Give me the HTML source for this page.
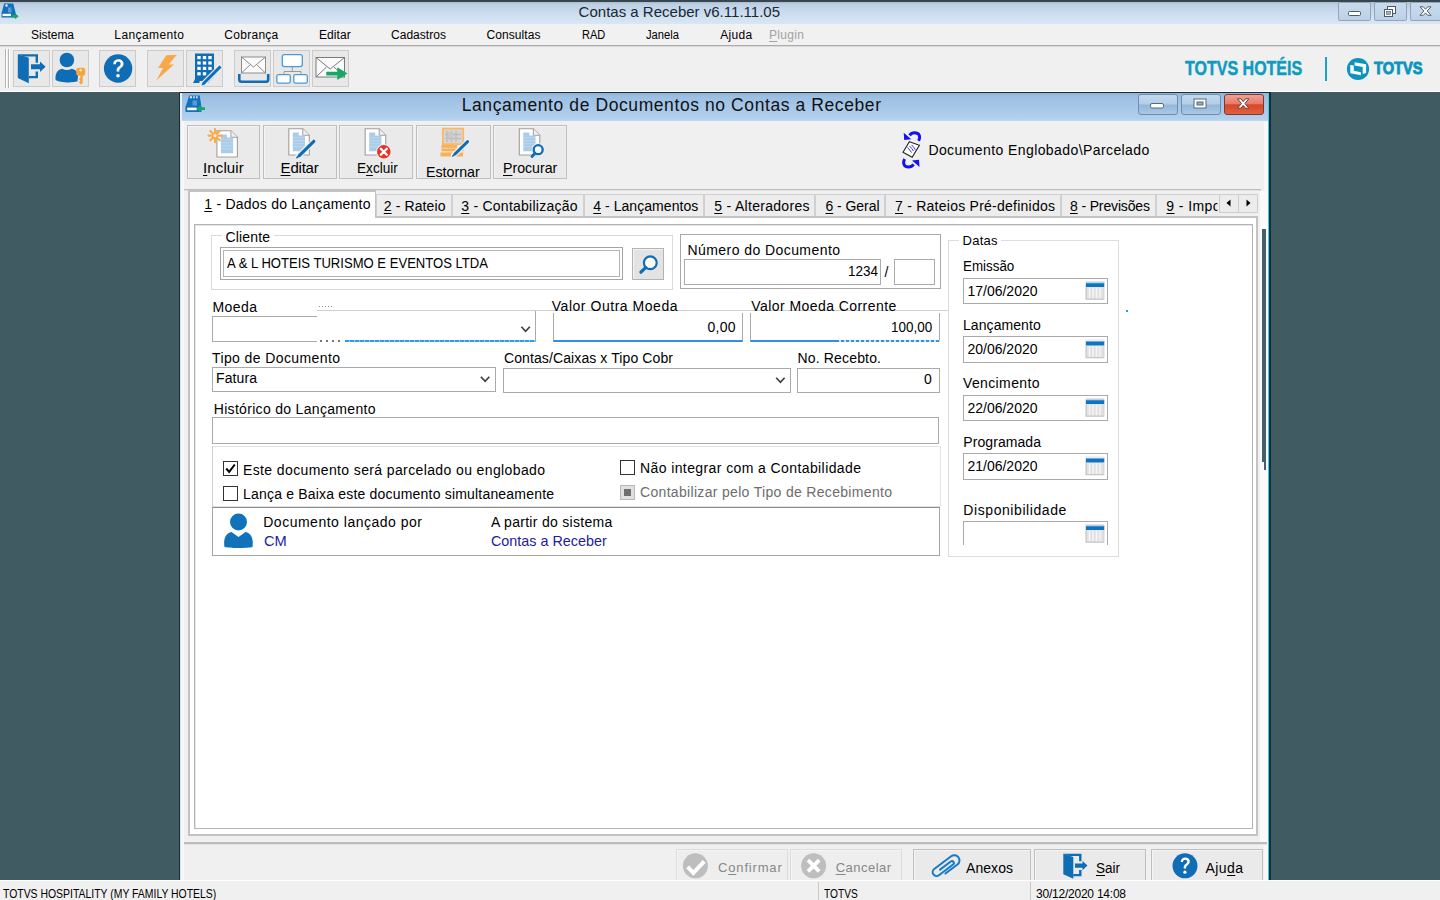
<!DOCTYPE html>
<html><head><meta charset="utf-8">
<style>
*{box-sizing:border-box;margin:0;padding:0}
html,body{width:1440px;height:900px;overflow:hidden;background:#405b62;font-family:"Liberation Sans",sans-serif;font-size:14px;color:#000}
.a{position:absolute}
.t{position:absolute;white-space:nowrap;line-height:16px;height:16px}
u{text-decoration:underline;text-underline-offset:2px;text-decoration-thickness:1px}
svg{position:absolute;overflow:visible}
.tb{position:absolute;top:50px;width:37px;height:37px;border:1px solid #cbcbcb;background:#e8e8e8}
.btn{position:absolute;border:1px solid #bfbfbf;background:#eaeaea;box-shadow:inset 1px 1px 0 #f4f4f4}
.inp{position:absolute;background:#fff;border:1px solid #aaa}
.tab{position:absolute;top:194px;height:22px;background:#ededed;border:1px solid #d0d0d0;border-bottom:none}
.cb{position:absolute;width:15px;height:15px;background:#fff;border:1px solid #333}
</style></head><body>
<!-- APP TITLE BAR -->
<div class="a" style="left:0;top:0;width:1440px;height:24px;background:linear-gradient(#38474f 0,#38474f 1.5px,#a9bccd 2px,#bccfe3 4px,#c6d9ec 10px,#d2e2f1 18px,#d9e6f3 24px)"></div>
<!-- app icon -->
<svg style="left:1px;top:3px" width="21" height="18" viewBox="0 0 21 18"><path d="M3.200 .5h9l2.500 9.500v4.500H.5V10z" fill="#1570bb"/><circle cx="5.500" cy="2.500" r="1.200" fill="#e8f2fb"/><rect x="7" y="4.500" width="3.500" height="5" fill="#5a9ad6"/><rect x="1.500" y="10.800" width="8.500" height="2.300" fill="#fff"/><path d="M10.500 12h3.500v-1.800l3.600 3-3.600 3v-1.800h-3.500z" fill="#10a86a"/></svg>
<!-- app caption buttons -->
<div class="a" style="left:1338px;top:2px;width:33px;height:19px;border:1px solid #93a5b8;border-radius:2px;background:linear-gradient(#c9dbed,#bdd1e6)"></div>
<div class="a" style="left:1374px;top:2px;width:33px;height:19px;border:1px solid #93a5b8;border-radius:2px;background:linear-gradient(#c9dbed,#bdd1e6)"></div>
<div class="a" style="left:1410px;top:2px;width:33px;height:19px;border:1px solid #93a5b8;border-radius:2px;background:linear-gradient(#c9dbed,#bdd1e6)"></div>
<svg style="left:1348px;top:11px" width="14" height="6"><rect x="0.5" y="0.5" width="12" height="4" rx="1" fill="#fff" stroke="#4c5a68"/></svg>
<svg style="left:1383px;top:5px" width="14" height="13"><rect x="4.5" y="1.5" width="8" height="7" fill="#fff" stroke="#4c5a68"/><rect x="1.5" y="4.5" width="8" height="7" fill="#fff" stroke="#4c5a68"/><rect x="3.5" y="6.5" width="4" height="3" fill="#9fb2c6" stroke="#4c5a68" stroke-width=".6"/></svg>
<svg style="left:1419px;top:6px" width="14" height="11"><path d="M1 .8h3.300l2.200 2.400L8.700.8H12L8.200 5l3.900 4.300H8.700L6.500 6.900 4.300 9.300H1L4.800 5z" fill="#fff" stroke="#55606c" stroke-width="1"/></svg>
<!-- MENU BAR -->
<div class="a" style="left:0;top:24px;width:1440px;height:22px;background:#f1f1f1"></div>
<div class="a" style="left:0;top:45px;width:1440px;height:2px;background:linear-gradient(#acacac 0,#acacac 50%,#d9d9d9 50%)"></div>
<!-- TOOLBAR -->
<div class="a" style="left:0;top:47px;width:1440px;height:44px;background:#f0f0f0"></div>
<div class="a" style="left:0;top:91px;width:1440px;height:1px;background:#fdfdfd"></div>
<div class="a" style="left:5px;top:49px;width:1px;height:39px;background:#b5b5b5"></div>
<div class="a" style="left:6px;top:49px;width:1px;height:39px;background:#fff"></div>
<div class="a" style="left:8px;top:49px;width:1px;height:39px;background:#b5b5b5"></div>
<div class="a" style="left:9px;top:49px;width:1px;height:39px;background:#fff"></div>
<div class="tb" style="left:13px"></div>
<div class="tb" style="left:52px"></div>
<div class="tb" style="left:99px"></div>
<div class="tb" style="left:147px"></div>
<div class="tb" style="left:186px"></div>
<div class="tb" style="left:234px"></div>
<div class="tb" style="left:273px"></div>
<div class="tb" style="left:312px"></div>
<!--TBICONS--><!-- toolbar icons -->
<svg style="left:0;top:0" width="360" height="92" viewBox="0 0 360 92">
<!-- 1 exit door -->
<g fill="#0f6db5">
<path d="M17.800 54.200l11 3.600v25.500l-11-5.300z"/>
<path d="M17.800 54.200h20.200v8.500h-2.400v-6.100H24z"/>
<path d="M35.600 71.500h2.400v6.800H28.800v-2.400h6.800z"/>
<path d="M31 64.300h9v-2.800l5.600 5.300-5.600 5.300v-2.800h-9z"/>
</g>
<!-- 2 user + key -->
<g fill="#0f6db5"><circle cx="66.900" cy="60" r="7.300"/><path d="M55.600 80c-.8-7 2.500-10.500 6.500-11.300 3 1.800 6.600 1.800 9.600 0 4 .8 6.500 3.500 6.300 7.300l-.5 5.300c-4 1.700-18 1.700-21.900-1.300z"/></g>
<path d="M76.200 69.300l1.500-1.500h6l1.500 1.500v5l-1.500 1.500h-1v7.200l-1.700 1.500-1.800-1.500v-1.200l1.200-1.100-1.200-1.100v-1.200l1.200-1v-1.600h-2.700l-1.500-1.500z" fill="#f5a63b"/>
<circle cx="80.700" cy="70.300" r="1.200" fill="#f0e6d6"/>
<!-- 3 help -->
<circle cx="118.100" cy="68.500" r="14.200" fill="#0f6db5"/>
<path d="M113.200 64.200c.2-3.200 2.300-5 5.200-5 3 0 5.100 1.800 5.100 4.500 0 2.200-1.200 3.300-2.600 4.300-1.200.9-1.600 1.500-1.600 3v.6h-2.700v-.9c0-2 .7-3 2.200-4.100 1.300-.9 1.800-1.600 1.800-2.800 0-1.300-.9-2.200-2.300-2.200-1.500 0-2.400.9-2.500 2.600z" fill="#fff"/>
<circle cx="118" cy="75.800" r="1.800" fill="#fff"/>
<!-- 4 lightning -->
<path d="M166.300 55.300l10.500-.5-8 9.800 5.200-.2-17.800 16.200 6.900-12.600-5 .1z" fill="#f7a94a"/>
<!-- 5 building + pencil -->
<path d="M195 53.500h19v23l-6 6.500h-2.500v-2h-6v2H193l2-4z" fill="#0f6db5"/>
<g fill="#fff"><rect x="197.300" y="56" width="3.400" height="3.200"/><rect x="202.800" y="56" width="3.400" height="3.200"/><rect x="208.300" y="56" width="3.400" height="3.200"/>
<rect x="197.300" y="61.400" width="3.400" height="3.200"/><rect x="202.800" y="61.400" width="3.400" height="3.200"/><rect x="208.300" y="61.400" width="3.400" height="3.200"/>
<rect x="197.300" y="66.800" width="3.400" height="3.200"/><rect x="202.800" y="66.800" width="3.400" height="3.200"/><rect x="208.300" y="66.800" width="3.400" height="3.200"/>
<rect x="197.300" y="72.200" width="3.400" height="3.200"/><rect x="202.800" y="72.200" width="3.400" height="3.200"/></g>
<path d="M219.500 64.500l3 3-17.500 17.500-4.500 1.500 1.500-4.500z" fill="#0f6db5" stroke="#ececec" stroke-width="1.200"/>
<!-- 6 envelope + tray -->
<rect x="241.500" y="57" width="24" height="16" fill="#fbfbfb" stroke="#8c8c8c" stroke-width="1"/>
<path d="M241.500 57l12 10 12-10M241.500 73l9-8.500M265.500 73l-9-8.500" fill="none" stroke="#8c8c8c" stroke-width="1"/>
<path d="M239.300 74v5.500q0 2.200 2.200 2.200h24.500q2.200 0 2.200-2.200V74" fill="none" stroke="#0f6db5" stroke-width="2.600"/>
<!-- 7 network -->
<rect x="282.300" y="54.600" width="20" height="12" rx="2" fill="#fff" stroke="#4a9ad8" stroke-width="1.300"/>
<path d="M292.300 67v4.500M284 75v-3.500h17V75" fill="none" stroke="#9a9a9a" stroke-width="1"/>
<rect x="276.800" y="74.600" width="13.500" height="8.600" rx="1.800" fill="#fff" stroke="#4a9ad8" stroke-width="1.300"/>
<rect x="293.800" y="74.600" width="13.500" height="8.600" rx="1.800" fill="#fff" stroke="#4a9ad8" stroke-width="1.300"/>
<!-- 8 envelope + arrow -->
<rect x="316" y="57.500" width="28.500" height="19.500" fill="#fbfbfb" stroke="#7a7a7a" stroke-width="1"/>
<path d="M316 57.500l14.200 11.500 14.300-11.500M316 77l10.500-10M344.500 77l-10.500-10" fill="none" stroke="#7a7a7a" stroke-width="1"/>
<path d="M326.300 71.700h11v-4.500l10.200 6.300-10.200 6.500v-4.500h-11z" fill="#18a765"/>
</svg>
<!--/TBICONS-->
<!-- logo -->
<div class="a" style="left:1324.500px;top:56.500px;width:2px;height:24.500px;background:#1aa3c6"></div>
<svg style="left:1344.900px;top:55.800px" width="26" height="26" viewBox="-13 -13 26 26"><circle r="11.100" fill="#0b95bd"/><path d="M-3.400-6.800L8.100-4.700V4L4.700 4.900V-1.900L-3.400-3.600z" fill="#fbfbfb"/><path d="M-7.700-4L-4.150-3.400V1.700L3 3.200V6.200L-7.700 4.150z" fill="#fbfbfb"/></svg>
<!-- CHILD WINDOW -->
<div class="a" style="left:179px;top:92px;width:1092px;height:788px;background:#1f2a30"></div>
<div class="a" style="left:180px;top:93px;width:1089px;height:787px;background:#c4dbef"></div>
<div class="a" style="left:1268px;top:93px;width:1px;height:787px;background:#1fd8f2"></div>
<div class="a" style="left:180px;top:93px;width:1088px;height:28px;background:linear-gradient(#8fb4d9 0,#9dbfe2 4px,#a6c7e8 14px,#b3d0ed 26px,#c0d9f0 28px)"></div>
<div class="a" style="left:184px;top:121px;width:1080px;height:759px;background:#f0f0f0"></div>
<div class="a" style="left:1264px;top:121px;width:4px;height:759px;background:#f8f8f8"></div>
<div class="a" style="left:1260px;top:191px;width:7px;height:653px;background:#fafafa"></div>
<div class="a" style="left:180px;top:121px;width:1px;height:759px;background:#cfe4f6"></div><div class="a" style="left:181px;top:121px;width:3px;height:759px;background:#f7f7f7"></div>
<div class="a" style="left:180px;top:93px;width:2px;height:28px;background:#e9f2fb"></div>
<!-- child icon -->
<svg style="left:185px;top:95px" width="21" height="18" viewBox="0 0 21 18"><path d="M4.200 .5h10.500l1.800 11.500v5H.5v-5z" fill="#1570bb"/><path d="M4.800 1.300h2.200v2H4.800zM8.200 1.300h1.600v2H8.200zM11 1.300h1.600v2H11z" fill="#dbe9f6"/><rect x="7.500" y="5.500" width="4.500" height="5" fill="#5a9ad6"/><rect x="2.200" y="12.600" width="9.500" height="2.600" fill="#fff"/><path d="M20 12.300h-4.500v-2.200l-4 3.600 4 3.600v-2.200H20z" fill="#10a86a"/></svg>
<!-- child caption buttons -->
<div class="a" style="left:1138px;top:94px;width:40px;height:21px;border:1px solid #6f8daf;border-radius:3px;background:linear-gradient(#c3d9ef 0,#b4cde7 48%,#93b6d9 52%,#a9c8e6 100%)"></div>
<div class="a" style="left:1181px;top:94px;width:40px;height:21px;border:1px solid #6f8daf;border-radius:3px;background:linear-gradient(#c3d9ef 0,#b4cde7 48%,#93b6d9 52%,#a9c8e6 100%)"></div>
<div class="a" style="left:1224px;top:94px;width:40px;height:21px;border:1px solid #7a3a33;border-radius:3px;background:linear-gradient(#f0a094 0,#e67e6d 45%,#d8462a 52%,#e0603f 100%)"></div>
<svg style="left:1150px;top:103px" width="16" height="7"><rect x="0.5" y="0.5" width="13" height="4.500" rx="1.5" fill="#fff" stroke="#59687a"/></svg>
<svg style="left:1193px;top:98px" width="16" height="12"><rect x="1" y="1" width="12" height="9" fill="#fff" stroke="#59687a"/><rect x="4" y="4" width="6" height="3" fill="#8fb0d2" stroke="#59687a"/></svg>
<svg style="left:1236px;top:98px" width="16" height="12"><path d="M1.500 .8h3.400l2.300 2.800 2.300-2.800h3.400L8.900 5.500l4 4.700H9.500L7.200 7.400 4.900 10.200H1.500l4-4.700z" fill="#fff" stroke="#6b3a36" stroke-width="1"/></svg>
<!-- child toolbar buttons -->
<div class="btn" style="left:187px;top:125px;width:73px;height:54px"></div>
<div class="btn" style="left:263px;top:125px;width:74px;height:54px"></div>
<div class="btn" style="left:339px;top:125px;width:74px;height:54px"></div>
<div class="btn" style="left:416px;top:125px;width:75px;height:54px"></div>
<div class="btn" style="left:493px;top:125px;width:74px;height:54px"></div>
<!--CHICONS--><svg style="left:0;top:0" width="1300" height="200" viewBox="0 0 1300 200">
<defs>
<g id="doc"><path d="M0.500 0.500h14l6.500 6.500v19.700H0.500z" fill="#fff" stroke="#a39e9e" stroke-width="1.100"/><path d="M14.500 0.500v6.500h6.500" fill="#eee" stroke="#a39e9e" stroke-width="1"/></g>
</defs>
<!-- Incluir -->
<g transform="translate(216.400,130.300)"><g transform=""><g><path d="M0.500 0.500h14l6.500 6.500v19.700H0.500z" fill="#fff" stroke="#a39e9e" stroke-width="1.100"/><path d="M14.500 0.500v6.500h6.500" fill="#eee" stroke="#a39e9e" stroke-width="1"/></g></g><path d="M4.500 4.300h6v3h6.200v15.600H4.500z" fill="#a9cce9"/><path d="M4.500 9.500h12.200M4.500 12.500h12.200M4.500 15.500h12.200M4.500 18.500h12.200" stroke="#c4dcf0" stroke-width=".8"/></g>
<g stroke="#f8ab4c" stroke-width="2.100" stroke-linecap="round"><path d="M215 129v13.200M208.400 135.600h13.200M210.300 130.900l9.400 9.400M219.700 130.900l-9.400 9.400"/></g>
<circle cx="215" cy="135.600" r="1.600" fill="#fff3e0"/>
<!-- Editar -->
<g transform="translate(288.300,128.300)"><g transform=""><g><path d="M0.500 0.500h14l6.500 6.500v19.700H0.500z" fill="#fff" stroke="#a39e9e" stroke-width="1.100"/><path d="M14.500 0.500v6.500h6.500" fill="#eee" stroke="#a39e9e" stroke-width="1"/></g></g><path d="M4.500 4.300h6v3h6.200v15.600H4.500z" fill="#a9cce9"/><path d="M4.500 9.500h12.200M4.500 12.500h12.200M4.500 15.500h12.200M4.500 18.500h12.200" stroke="#c4dcf0" stroke-width=".8"/></g>
<path d="M313.800 141.300L298 156.800" stroke="#f0f0f0" stroke-width="5.500" stroke-linecap="round"/>
<path d="M313.800 141.300L299.300 155.600" stroke="#0f6db5" stroke-width="3.200" stroke-linecap="round"/>
<path d="M300.300 154.600l-3.300 3" stroke="#0f6db5" stroke-width="1.800" stroke-linecap="round"/>
<!-- Excluir -->
<g transform="translate(364.700,128.300)"><g transform=""><g><path d="M0.500 0.500h14l6.500 6.500v19.700H0.500z" fill="#fff" stroke="#a39e9e" stroke-width="1.100"/><path d="M14.500 0.500v6.500h6.500" fill="#eee" stroke="#a39e9e" stroke-width="1"/></g></g><path d="M4.500 4.300h6v3h6.200v15.600H4.500z" fill="#a9cce9"/><path d="M4.500 9.500h12.200M4.500 12.500h12.200M4.500 15.500h12.200M4.500 18.500h12.200" stroke="#c4dcf0" stroke-width=".8"/></g>
<circle cx="383.800" cy="151.700" r="7.600" fill="#f0f0f0"/>
<circle cx="383.800" cy="151.700" r="6.800" fill="#e4352b"/>
<path d="M380.800 148.700l6 6M386.800 148.700l-6 6" stroke="#fff" stroke-width="2.300" stroke-linecap="round"/>
<!-- Estornar -->
<rect x="442.800" y="128.600" width="20.400" height="15.500" fill="#d6d6d6" stroke="#f9b968" stroke-width="1.800"/>
<path d="M447 131v11M451.500 131v11M456 131v11M445 134.500h16M445 138.500h16" stroke="#bdbdbd" stroke-width="1.400"/>
<rect x="448" y="132" width="5" height="6" fill="#c9c9c9"/>
<path d="M441.500 145h15.500v3h6.500v3.200h-22zM440.500 152.300h22.500v4.200h-22.500z" fill="#f9b056"/>
<path d="M441.500 148.300h21M440.500 152.200h22" stroke="#fcd6a4" stroke-width=".8"/>
<path d="M467.600 141.600L453.600 155.300" stroke="#f0f0f0" stroke-width="5.500" stroke-linecap="round"/>
<path d="M467.600 141.600L455 154" stroke="#0f6db5" stroke-width="3" stroke-linecap="round"/>
<path d="M455.800 153.200l-3 2.800" stroke="#0f6db5" stroke-width="1.700" stroke-linecap="round"/>
<!-- Procurar -->
<g transform="translate(518.800,128.300)"><g transform=""><g><path d="M0.500 0.500h14l6.500 6.500v19.700H0.500z" fill="#fff" stroke="#a39e9e" stroke-width="1.100"/><path d="M14.500 0.500v6.500h6.500" fill="#eee" stroke="#a39e9e" stroke-width="1"/></g></g><path d="M4.500 4.300h6v3h6.200v15.600H4.500z" fill="#a9cce9"/><path d="M4.500 9.500h12.200M4.500 12.500h12.200M4.500 15.500h12.200M4.500 18.500h12.200" stroke="#c4dcf0" stroke-width=".8"/></g>
<circle cx="538.200" cy="149.700" r="6.600" fill="#f0f0f0"/>
<circle cx="538.200" cy="149.700" r="4.500" fill="#f4fbff" stroke="#0f6db5" stroke-width="2.300"/>
<path d="M535 153.200l-3 3.300" stroke="#0f6db5" stroke-width="2.800" stroke-linecap="round"/>
</svg>
<!--/CHICONS-->
<!-- separator line above tabs -->
<div class="a" style="left:184px;top:189px;width:1077px;height:1px;background:#bdbdbd"></div>
<div class="a" style="left:184px;top:190px;width:1077px;height:1px;background:#e2e2e2"></div>
<!-- tab page frame -->
<div class="a" style="left:188px;top:216px;width:1070px;height:620px;background:#fff;border:2px solid #c3c3c3"></div>
<div class="a" style="left:194px;top:224px;width:1059px;height:605px;background:#fff;border:1px solid #b4b4b4;box-shadow:inset 1px 1px 0 #e6e6e6"></div>
<!-- tabs -->
<div class="tab" style="left:376px;width:76px"></div>
<div class="tab" style="left:452px;width:132px"></div>
<div class="tab" style="left:584px;width:120px"></div>
<div class="tab" style="left:704px;width:111px"></div>
<div class="tab" style="left:815px;width:70px"></div>
<div class="tab" style="left:885px;width:176px"></div>
<div class="tab" style="left:1061px;width:95px"></div>
<div class="tab" style="left:1156px;width:64px;border-right:none"></div>
<div class="a" style="left:188px;top:190px;width:188px;height:28px;background:#fff;border:2px solid #c3c3c3;border-bottom:none;border-right:1px solid #c3c3c3"></div>
<!-- tab scroll buttons -->
<div class="a" style="left:1219px;top:194px;width:20px;height:19px;background:#ececec;border:1px solid #cdcdcd"></div>
<div class="a" style="left:1238px;top:194px;width:20px;height:19px;background:#ececec;border:1px solid #cdcdcd"></div>
<svg style="left:1225px;top:199px" width="8" height="9"><path d="M5.500 0.500v7L1.500 4z" fill="#000"/></svg>
<svg style="left:1245px;top:199px" width="8" height="9"><path d="M1.500 0.500v7L5.500 4z" fill="#000"/></svg>
<!-- right dark strip -->
<div class="a" style="left:1262px;top:229px;width:4px;height:233px;background:#44606a"></div>
<div class="a" style="left:1264px;top:462px;width:2px;height:8px;background:#44606a"></div>
<!-- bottom separator -->
<div class="a" style="left:184px;top:842px;width:1083px;height:2px;background:#bcbcbc"></div>
<div class="a" style="left:184px;top:844px;width:1083px;height:1px;background:#e4e4e4"></div>
<!-- bottom buttons -->
<div class="btn" style="left:676px;top:849px;width:112px;height:31px;border-bottom:none;background:#eee;border-color:#dcdcdc"></div>
<div class="btn" style="left:790px;top:849px;width:112px;height:31px;border-bottom:none;background:#eee;border-color:#dcdcdc"></div>
<div class="btn" style="left:913px;top:849px;width:118px;height:31px;border-bottom:none"></div>
<div class="btn" style="left:1034px;top:849px;width:112px;height:31px;border-bottom:none"></div>
<div class="btn" style="left:1151px;top:849px;width:112px;height:31px;border-bottom:none"></div>
<!--BOTICONS--><svg style="left:0;top:0" width="1300" height="880" viewBox="0 0 1300 880">
<!-- confirmar -->
<circle cx="695.400" cy="865.800" r="12.500" fill="#bebebe"/>
<path d="M687.600 866.800l5.800 6 10.800-11.500" fill="none" stroke="#fff" stroke-width="4"/>
<!-- cancelar -->
<circle cx="813.600" cy="865.800" r="12.500" fill="#bebebe"/>
<path d="M808 860.200l11.200 11.200M819.200 860.200l-11.200 11.200" fill="none" stroke="#fff" stroke-width="3.800"/>
<!-- anexos paperclip -->
<g transform="translate(946.300,866.400) rotate(53)">
<path d="M5.200 5V-10a5.200 5.200 0 0 0-10.400 0V11.200a3.900 3.900 0 0 0 7.800 0V-6.500a1.900 1.900 0 0 0-3.800 0V7" fill="none" stroke="#1879c4" stroke-width="2" stroke-linecap="round"/>
</g>
<!-- sair -->
<g fill="#0f6db5" transform="translate(1045.500,799.500)">
<path d="M17.800 54.200l10 3.300v21.800l-10-4.500z"/>
<path d="M17.800 54.200h18.200v7.500h-2.400v-5.100H24z"/>
<path d="M33.600 70.500h2.400v6.300H27.800v-2.400h5.800z"/>
<path d="M29.500 64h7.500v-2.600l5 4.700-5 4.700v-2.600h-7.500z"/>
</g>
<!-- ajuda -->
<circle cx="1185" cy="865.800" r="12.500" fill="#0f6db5"/>
<path d="M1180.700 862c.2-2.800 2-4.400 4.600-4.400 2.600 0 4.500 1.600 4.500 4 0 1.900-1.100 2.900-2.300 3.800-1.100.800-1.400 1.300-1.400 2.600v.5h-2.400v-.8c0-1.800.6-2.600 1.900-3.600 1.100-.8 1.600-1.400 1.600-2.500 0-1.100-.8-1.900-2-1.900-1.300 0-2.100.8-2.200 2.300z" fill="#fff"/>
<circle cx="1184.900" cy="872.200" r="1.600" fill="#fff"/>
</svg>
<!--/BOTICONS-->
<!-- FORM -->
<!-- Cliente group -->
<div class="a" style="left:211px;top:235px;width:462px;height:55px;border:1px solid #dadada"></div>
<div class="a" style="left:222px;top:230px;width:52px;height:14px;background:#fff"></div>
<div class="inp" style="left:220px;top:247px;width:403px;height:33px;border-color:#a4a4a4"></div>
<div class="a" style="left:223px;top:250px;width:397px;height:27px;border:1px solid #b4b4b4"></div>
<div class="btn" style="left:632px;top:248px;width:32px;height:32px;background:#e3e3e3;border-color:#b3b3b3"></div>
<!-- Numero group -->
<div class="a" style="left:680px;top:234px;width:261px;height:55px;border:1px solid #a8a8a8;box-shadow:inset 1px 1px 0 #fff,1px 1px 0 #fff"></div>
<div class="inp" style="left:684px;top:259px;width:197px;height:26px"></div>
<div class="inp" style="left:894px;top:259px;width:41px;height:26px"></div>
<!-- Moeda row -->
<div class="inp" style="left:212px;top:316px;width:324px;height:26px"></div>
<div class="inp" style="left:553px;top:313px;width:190px;height:29px;border-top:none;border-bottom:2px solid #2f8fe0"></div>
<div class="inp" style="left:750px;top:313px;width:190px;height:29px;border-top:none;border-bottom:2px solid #2f8fe0"></div>
<!-- overlay artifact -->
<div class="a" style="left:317px;top:311px;width:219px;height:6px;background:#fff"></div>
<div class="a" style="left:317px;top:310px;width:631px;height:1px;background:#cfcfcf"></div>
<div class="a" style="left:535px;top:311px;width:1px;height:6px;background:#aaa"></div>
<div class="a" style="left:317px;top:340px;width:218px;height:3px;background:#fff"></div>
<div class="a" style="left:319px;top:306px;width:14px;height:1px;background:repeating-linear-gradient(90deg,#9a9a9a 0,#9a9a9a 1px,#fff 1px,#fff 3px)"></div>
<div class="a" style="left:320px;top:340px;width:22px;height:2px;background:repeating-linear-gradient(90deg,#777 0,#777 2px,#fff 2px,#fff 6px)"></div>
<div class="a" style="left:345px;top:340px;width:190px;height:2px;background:repeating-linear-gradient(90deg,#2f9be8 0,#2f9be8 4px,#8cc8f2 4px,#8cc8f2 5px)"></div>
<div class="a" style="left:836px;top:340px;width:104px;height:2px;background:repeating-linear-gradient(90deg,#2f8fe0 0,#2f8fe0 3px,#cfe6f8 3px,#cfe6f8 5px)"></div>
<div class="a" style="left:1126px;top:310px;width:2px;height:2px;background:#2f9be8"></div>
<!-- Tipo row -->
<div class="inp" style="left:212px;top:367px;width:284px;height:25px"></div>
<div class="inp" style="left:503px;top:368px;width:288px;height:25px"></div>
<div class="inp" style="left:797px;top:368px;width:143px;height:25px"></div>
<!-- Historico -->
<div class="inp" style="left:212px;top:417px;width:727px;height:27px"></div>
<!-- checkbox panel -->
<div class="a" style="left:212px;top:446px;width:729px;height:61px;border:1px solid #e3e3e3;border-left-color:#cfcfcf"></div>
<div class="cb" style="left:223px;top:461px"></div>
<div class="cb" style="left:223px;top:486px"></div>
<div class="cb" style="left:620px;top:460px"></div>
<div class="cb" style="left:620px;top:485px;background:#e0e0e0;border-color:#b9b9b9"></div>
<div class="a" style="left:624px;top:489px;width:7px;height:7px;background:#6e6e6e"></div>
<svg style="left:224px;top:462px" width="13" height="13"><path d="M2.200 6.500l3 3.400L10.800 2.500" fill="none" stroke="#000" stroke-width="2"/></svg>
<!-- info box -->
<div class="a" style="left:212px;top:507px;width:728px;height:49px;background:#fff;border:1px solid #a6a6a6;border-top-color:#8c8c8c"></div>
<svg style="left:224px;top:513px" width="29" height="35" viewBox="0 0 29 35"><circle cx="14.500" cy="9" r="8.500" fill="#1072b8"/><path d="M0.500 34c-1.500-9 2-14 7-15l7 5 7-5c5 1 8.500 6 7 15c-4 1.300-24 1.300-28 0z" fill="#1072b8"/></svg>
<!-- Datas group -->
<div class="a" style="left:948px;top:240px;width:171px;height:317px;border:1px solid #dddddd"></div>
<div class="a" style="left:959px;top:233px;width:42px;height:14px;background:#fff"></div>
<div class="inp" style="left:963px;top:278px;width:145px;height:26px"></div>
<div class="inp" style="left:963px;top:336px;width:145px;height:27px"></div>
<div class="inp" style="left:963px;top:395px;width:145px;height:26px"></div>
<div class="inp" style="left:963px;top:453px;width:145px;height:27px"></div>
<div class="inp" style="left:963px;top:521px;width:145px;height:24px;border-bottom:none"></div>
<!--FORMICONS--><svg style="left:0;top:0" width="1300" height="600" viewBox="0 0 1300 600">
<defs>
<g id="cal"><rect x="0" y="0" width="19" height="1.200" fill="#f3dede"/><rect x="0.500" y="2" width="18.500" height="4.200" fill="#1173bd"/><rect x="0.500" y="1.500" width="18.500" height="1" fill="#57b3e8"/><rect x="0.500" y="6.200" width="18.500" height="12.300" fill="#e2e2e2"/><path d="M4.200 6.500v11.500M7.700 6.500v11.500M11.200 6.500v11.500M14.700 6.500v11.500" stroke="#f6f6f6" stroke-width="1.300"/><path d="M0.800 6.200v12h18" fill="none" stroke="#c6c6c6" stroke-width="1.200"/><rect x="17.800" y="6.200" width="1.200" height="12" fill="#d8d8d8"/></g>
<path id="chev" d="M-4.200-2.800L0 1.800 4.200-2.800" fill="none" stroke="#404040" stroke-width="1.700"/>
</defs>
<!-- search magnifier -->
<circle cx="650.300" cy="262.800" r="6.400" fill="#fdfdfd" stroke="#0f6db5" stroke-width="2.200"/>
<path d="M645.600 267.600l-4.700 4.600" stroke="#0f6db5" stroke-width="3.200" stroke-linecap="round"/>
<!-- calendars -->
<g transform="translate(1085.300,281)"><g><rect x="0" y="0" width="19" height="1.200" fill="#f3dede"/><rect x="0.500" y="2" width="18.500" height="4.200" fill="#1173bd"/><rect x="0.500" y="1.500" width="18.500" height="1" fill="#57b3e8"/><rect x="0.500" y="6.200" width="18.500" height="12.300" fill="#e2e2e2"/><path d="M4.200 6.500v11.500M7.700 6.500v11.500M11.200 6.500v11.500M14.700 6.500v11.500" stroke="#f6f6f6" stroke-width="1.300"/><path d="M0.800 6.200v12h18" fill="none" stroke="#c6c6c6" stroke-width="1.200"/><rect x="17.800" y="6.200" width="1.200" height="12" fill="#d8d8d8"/></g></g>
<g transform="translate(1085.300,339.500)"><g><rect x="0" y="0" width="19" height="1.200" fill="#f3dede"/><rect x="0.500" y="2" width="18.500" height="4.200" fill="#1173bd"/><rect x="0.500" y="1.500" width="18.500" height="1" fill="#57b3e8"/><rect x="0.500" y="6.200" width="18.500" height="12.300" fill="#e2e2e2"/><path d="M4.200 6.500v11.500M7.700 6.500v11.500M11.200 6.500v11.500M14.700 6.500v11.500" stroke="#f6f6f6" stroke-width="1.300"/><path d="M0.800 6.200v12h18" fill="none" stroke="#c6c6c6" stroke-width="1.200"/><rect x="17.800" y="6.200" width="1.200" height="12" fill="#d8d8d8"/></g></g>
<g transform="translate(1085.300,398)"><g><rect x="0" y="0" width="19" height="1.200" fill="#f3dede"/><rect x="0.500" y="2" width="18.500" height="4.200" fill="#1173bd"/><rect x="0.500" y="1.500" width="18.500" height="1" fill="#57b3e8"/><rect x="0.500" y="6.200" width="18.500" height="12.300" fill="#e2e2e2"/><path d="M4.200 6.500v11.500M7.700 6.500v11.500M11.200 6.500v11.500M14.700 6.500v11.500" stroke="#f6f6f6" stroke-width="1.300"/><path d="M0.800 6.200v12h18" fill="none" stroke="#c6c6c6" stroke-width="1.200"/><rect x="17.800" y="6.200" width="1.200" height="12" fill="#d8d8d8"/></g></g>
<g transform="translate(1085.300,456.500)"><g><rect x="0" y="0" width="19" height="1.200" fill="#f3dede"/><rect x="0.500" y="2" width="18.500" height="4.200" fill="#1173bd"/><rect x="0.500" y="1.500" width="18.500" height="1" fill="#57b3e8"/><rect x="0.500" y="6.200" width="18.500" height="12.300" fill="#e2e2e2"/><path d="M4.200 6.500v11.500M7.700 6.500v11.500M11.200 6.500v11.500M14.700 6.500v11.500" stroke="#f6f6f6" stroke-width="1.300"/><path d="M0.800 6.200v12h18" fill="none" stroke="#c6c6c6" stroke-width="1.200"/><rect x="17.800" y="6.200" width="1.200" height="12" fill="#d8d8d8"/></g></g>
<g transform="translate(1085.300,524)"><g><rect x="0" y="0" width="19" height="1.200" fill="#f3dede"/><rect x="0.500" y="2" width="18.500" height="4.200" fill="#1173bd"/><rect x="0.500" y="1.500" width="18.500" height="1" fill="#57b3e8"/><rect x="0.500" y="6.200" width="18.500" height="12.300" fill="#e2e2e2"/><path d="M4.200 6.500v11.500M7.700 6.500v11.500M11.200 6.500v11.500M14.700 6.500v11.500" stroke="#f6f6f6" stroke-width="1.300"/><path d="M0.800 6.200v12h18" fill="none" stroke="#c6c6c6" stroke-width="1.200"/><rect x="17.800" y="6.200" width="1.200" height="12" fill="#d8d8d8"/></g></g>
<!-- chevrons -->
<g transform="translate(525.600,329.500)"><path d="M-4.200-2.800L0 1.800 4.200-2.800" fill="none" stroke="#404040" stroke-width="1.700"/></g>
<g transform="translate(485.100,379.500)"><path d="M-4.200-2.800L0 1.800 4.200-2.800" fill="none" stroke="#404040" stroke-width="1.700"/></g>
<g transform="translate(780.400,380.500)"><path d="M-4.200-2.800L0 1.800 4.200-2.800" fill="none" stroke="#404040" stroke-width="1.700"/></g>
<!-- documento englobado icon -->
<g id="darr"><path d="M918.600 140.800c2.200-4.200.8-8-4.200-8-2 0-3.500.8-4.800 2.600" fill="none" stroke="#1212ee" stroke-width="2.900"/><path d="M903.700 132.800l.5 7.200 7-.8z" fill="#1212ee"/></g>
<g transform="rotate(180 911.600 149.900)"><g><path d="M918.600 140.800c2.200-4.200.8-8-4.200-8-2 0-3.500.8-4.800 2.600" fill="none" stroke="#1212ee" stroke-width="2.900"/><path d="M903.700 132.800l.5 7.200 7-.8z" fill="#1212ee"/></g></g>
<path d="M909.400 141.700l10 3.600-7.200 11.900-9.200-5z" fill="#fff" stroke="#222" stroke-width="1.100"/>
<path d="M907.500 147.500q2.500 2.500 4 5M909.500 146q2.500 2.500 4 5M911.500 144.800q2.500 2.500 4 5" stroke="#2222dd" stroke-width=".9" fill="none"/>
</svg>
<!--/FORMICONS-->

<!-- STATUS BAR -->
<div class="a" style="left:0;top:880px;width:1440px;height:20px;background:#f0f0f0"></div>
<div class="a" style="left:0;top:880px;width:1440px;height:1px;background:#fff"></div>
<div class="a" style="left:818px;top:882px;width:1px;height:18px;background:#c8c8c8"></div>
<div class="a" style="left:1030px;top:882px;width:1px;height:18px;background:#c8c8c8"></div>

<!--TEXTS-->
<div class="t" style="left:578.60px;top:4.30px;font-size:15px;letter-spacing:0.006px;color:#1b2733;">Contas a Receber v6.11.11.05</div>
<div class="t" style="left:31.00px;top:26.60px;font-size:12px;letter-spacing:-0.060px;">Sistema</div>
<div class="t" style="left:114.30px;top:26.60px;font-size:12px;letter-spacing:0.406px;">Lançamento</div>
<div class="t" style="left:224.30px;top:26.60px;font-size:12px;letter-spacing:0.281px;">Cobrança</div>
<div class="t" style="left:319.00px;top:26.60px;font-size:12px;letter-spacing:0.068px;">Editar</div>
<div class="t" style="left:391.00px;top:26.60px;font-size:12px;letter-spacing:0.037px;">Cadastros</div>
<div class="t" style="left:486.50px;top:26.60px;font-size:12px;letter-spacing:0.078px;">Consultas</div>
<div class="t" style="left:581.70px;top:26.60px;font-size:12px;transform:scaleX(0.9194);transform-origin:0 50%;">RAD</div>
<div class="t" style="left:646.00px;top:26.60px;font-size:12px;transform:scaleX(0.9329);transform-origin:0 50%;">Janela</div>
<div class="t" style="left:720.30px;top:26.60px;font-size:12px;letter-spacing:0.324px;">Ajuda</div>
<div class="t" style="left:769.00px;top:26.60px;font-size:12px;letter-spacing:0.288px;color:#a3a3a3;"><u>P</u>lugin</div>
<div class="t" style="left:2.70px;top:885.50px;font-size:12px;transform:scaleX(0.8692);transform-origin:0 50%;">TOTVS HOSPITALITY (MY FAMILY HOTELS)</div>
<div class="t" style="left:823.75px;top:885.50px;font-size:12px;transform:scaleX(0.8481);transform-origin:0 50%;">TOTVS</div>
<div class="t" style="left:1036.00px;top:885.50px;font-size:12px;letter-spacing:-0.228px;">30/12/2020 14:08</div>
<div class="t" style="left:461.70px;top:97.30px;font-size:17.5px;letter-spacing:0.588px;color:#111;">Lançamento de Documentos no Contas a Receber</div>
<div class="t" style="left:203.00px;top:160.00px;font-size:15px;letter-spacing:0.122px;"><u>I</u>ncluir</div>
<div class="t" style="left:280.60px;top:160.00px;font-size:15px;letter-spacing:-0.208px;"><u>E</u>ditar</div>
<div class="t" style="left:356.70px;top:160.30px;font-size:15px;transform:scaleX(0.9064);transform-origin:0 50%;">E<u>x</u>cluir</div>
<div class="t" style="left:426.30px;top:163.70px;font-size:15px;transform:scaleX(0.9470);transform-origin:0 50%;">Estornar</div>
<div class="t" style="left:503.30px;top:160.00px;font-size:15px;transform:scaleX(0.9421);transform-origin:0 50%;"><u>P</u>rocurar</div>
<div class="t" style="left:928.40px;top:142.00px;font-size:14px;letter-spacing:0.412px;">Documento Englobado\Parcelado</div>
<div class="t" style="left:204.25px;top:195.75px;font-size:14px;letter-spacing:0.234px;"><u>1</u> - Dados do Lançamento</div>
<div class="t" style="left:383.75px;top:198.00px;font-size:14px;letter-spacing:0.116px;"><u>2</u> - Rateio</div>
<div class="t" style="left:461.25px;top:198.00px;font-size:14px;letter-spacing:0.246px;"><u>3</u> - Contabilização</div>
<div class="t" style="left:593.25px;top:198.00px;font-size:14px;letter-spacing:0.050px;"><u>4</u> - Lançamentos</div>
<div class="t" style="left:714.25px;top:198.00px;font-size:14px;letter-spacing:0.299px;"><u>5</u> - Alteradores</div>
<div class="t" style="left:825.50px;top:198.00px;font-size:14px;letter-spacing:-0.059px;"><u>6</u> - Geral</div>
<div class="t" style="left:895.00px;top:198.00px;font-size:14px;letter-spacing:0.247px;"><u>7</u> - Rateios Pré-definidos</div>
<div class="t" style="left:1070.00px;top:198.00px;font-size:14px;letter-spacing:-0.142px;"><u>8</u> - Previsões</div>
<div class="t" style="left:1166.30px;top:198.00px;font-size:14px;letter-spacing:0.406px;clip-path:inset(0 3.5px 0 0);"><u>9</u> - Impo</div>
<div class="t" style="left:225.50px;top:229.00px;font-size:14px;letter-spacing:0.151px;">Cliente</div>
<div class="t" style="left:227.00px;top:255.00px;font-size:14px;transform:scaleX(0.9336);transform-origin:0 50%;">A & L HOTEIS TURISMO E EVENTOS LTDA</div>
<div class="t" style="left:687.50px;top:241.50px;font-size:14px;letter-spacing:0.431px;">Número do Documento</div>
<div class="t" style="left:847.50px;top:263.00px;font-size:14px;transform:scaleX(0.9629);transform-origin:0 50%;">1234</div>
<div class="t" style="left:884.50px;top:264.00px;font-size:14px;letter-spacing:0.109px;">/</div>
<div class="t" style="left:212.50px;top:299.00px;font-size:14px;letter-spacing:0.422px;">Moeda</div>
<div class="t" style="left:551.75px;top:298.00px;font-size:14px;letter-spacing:0.531px;">Valor Outra Moeda</div>
<div class="t" style="left:751.25px;top:298.00px;font-size:14px;letter-spacing:0.437px;">Valor Moeda Corrente</div>
<div class="t" style="left:707.50px;top:319.00px;font-size:14px;letter-spacing:0.250px;">0,00</div>
<div class="t" style="left:891.25px;top:319.00px;font-size:14px;transform:scaleX(0.9632);transform-origin:0 50%;">100,00</div>
<div class="t" style="left:212.00px;top:349.50px;font-size:14px;letter-spacing:0.396px;">Tipo de Documento</div>
<div class="t" style="left:216.00px;top:370.00px;font-size:14px;letter-spacing:0.106px;">Fatura</div>
<div class="t" style="left:504.00px;top:349.50px;font-size:14px;letter-spacing:0.103px;">Contas/Caixas x Tipo Cobr</div>
<div class="t" style="left:797.50px;top:349.50px;font-size:14px;letter-spacing:0.162px;">No. Recebto.</div>
<div class="t" style="left:924.00px;top:371.00px;font-size:14px;letter-spacing:0.703px;">0</div>
<div class="t" style="left:213.75px;top:400.75px;font-size:14px;letter-spacing:0.312px;">Histórico do Lançamento</div>
<div class="t" style="left:243.00px;top:461.50px;font-size:14px;letter-spacing:0.380px;">Este documento será parcelado ou englobado</div>
<div class="t" style="left:243.00px;top:485.75px;font-size:14px;letter-spacing:0.192px;">Lança e Baixa este documento simultaneamente</div>
<div class="t" style="left:640.00px;top:460.30px;font-size:14px;letter-spacing:0.401px;">Não integrar com a Contabilidade</div>
<div class="t" style="left:640.00px;top:484.40px;font-size:14px;letter-spacing:0.320px;color:#6d6d6d;">Contabilizar pelo Tipo de Recebimento</div>
<div class="t" style="left:263.25px;top:514.00px;font-size:14px;letter-spacing:0.505px;">Documento lançado por</div>
<div class="t" style="left:263.50px;top:532.75px;font-size:15px;transform:scaleX(0.9752);transform-origin:0 50%;color:#1c1c9c;">CM</div>
<div class="t" style="left:491.00px;top:514.30px;font-size:14px;letter-spacing:0.298px;">A partir do sistema</div>
<div class="t" style="left:491.00px;top:532.70px;font-size:15px;transform:scaleX(0.9569);transform-origin:0 50%;color:#1c1c9c;">Contas a Receber</div>
<div class="t" style="left:962.50px;top:232.50px;font-size:13px;letter-spacing:0.258px;">Datas</div>
<div class="t" style="left:963.00px;top:258.00px;font-size:14px;transform:scaleX(0.9546);transform-origin:0 50%;">Emissão</div>
<div class="t" style="left:963.00px;top:316.50px;font-size:14px;letter-spacing:0.076px;">Lançamento</div>
<div class="t" style="left:963.00px;top:375.00px;font-size:14px;letter-spacing:0.370px;">Vencimento</div>
<div class="t" style="left:963.30px;top:433.70px;font-size:14px;letter-spacing:0.073px;">Programada</div>
<div class="t" style="left:963.30px;top:501.80px;font-size:14px;letter-spacing:0.582px;">Disponibilidade</div>
<div class="t" style="left:967.50px;top:282.50px;font-size:14px;letter-spacing:-0.009px;">17/06/2020</div>
<div class="t" style="left:967.50px;top:341.00px;font-size:14px;letter-spacing:-0.009px;">20/06/2020</div>
<div class="t" style="left:967.50px;top:399.50px;font-size:14px;letter-spacing:-0.009px;">22/06/2020</div>
<div class="t" style="left:967.50px;top:458.00px;font-size:14px;letter-spacing:-0.009px;">21/06/2020</div>
<div class="t" style="left:718.00px;top:860.30px;font-size:13px;letter-spacing:0.834px;color:#878787;">C<u>o</u>nfirmar</div>
<div class="t" style="left:835.75px;top:860.30px;font-size:13px;letter-spacing:0.460px;color:#878787;"><u>C</u>ancelar</div>
<div class="t" style="left:966.00px;top:860.00px;font-size:14px;letter-spacing:0.059px;">Anexos</div>
<div class="t" style="left:1096.00px;top:860.00px;font-size:14px;transform:scaleX(0.9636);transform-origin:0 50%;"><u>S</u>air</div>
<div class="t" style="left:1205.60px;top:860.00px;font-size:14px;letter-spacing:0.397px;">Aju<u>d</u>a</div>
<div class="t" style="left:1185.00px;top:60.30px;font-size:21px;transform:scaleX(0.7628);transform-origin:0 50%;color:#0e9bc0;font-weight:bold;-webkit-text-stroke:0.5px #0e9bc0;">TOTVS HOTÉIS</div>
<div class="t" style="left:1374.40px;top:61.00px;font-size:17px;transform:scaleX(0.8621);transform-origin:0 50%;color:#0b95bd;font-weight:bold;-webkit-text-stroke:0.9px #0b95bd;">TOTVS</div>
</body></html>
